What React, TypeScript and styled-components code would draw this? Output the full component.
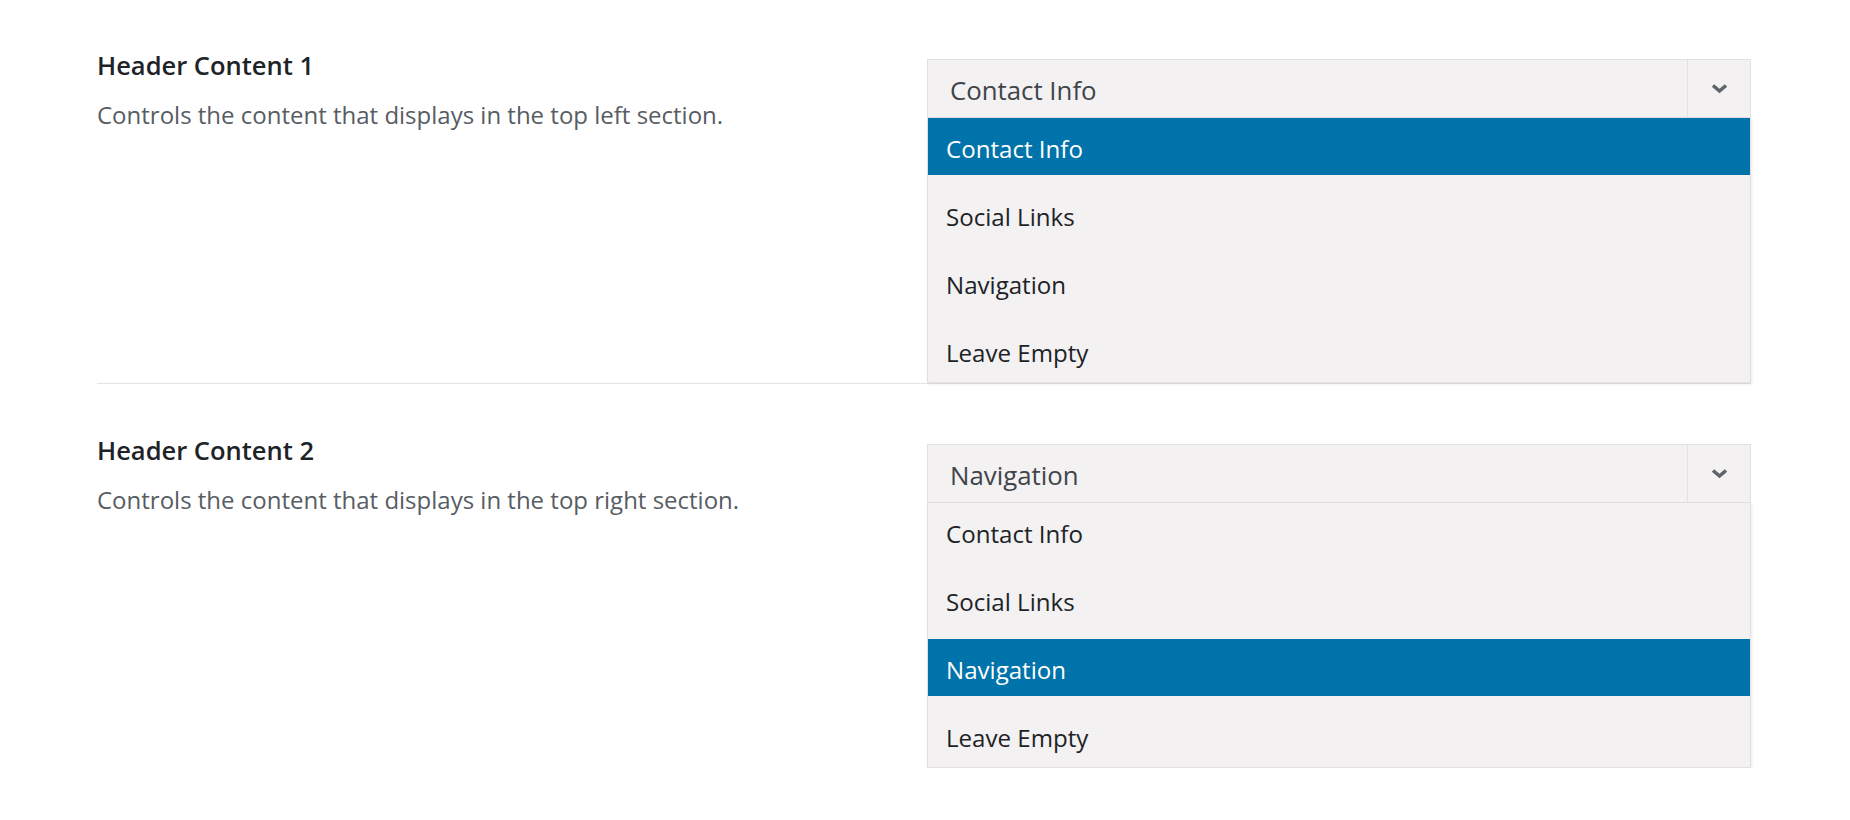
import React from 'react'
import styled, { createGlobalStyle } from 'styled-components';

const GlobalStyle = createGlobalStyle`
  body {
    margin: 0;
    background: #fff;
    font-family: "Open Sans", "Noto Sans", sans-serif;
  }
`

const options = ['Contact Info', 'Social Links', 'Navigation', 'Leave Empty'];

const settings = [
  { title: 'Header Content 1', description: 'Controls the content that displays in the top left section.', value: 'Contact Info' },
  { title: 'Header Content 2', description: 'Controls the content that displays in the top right section.', value: 'Navigation' },
];

function Chevron() {
  return (
    <svg width="17" height="11" viewBox="0 0 17 11">
      <polyline points="2,2.5 8.5,8 15,2.5" fill="none" stroke="#5f6469" strokeWidth="3.6" />
    </svg>
  )
}

function App() {
  return (
    <>
      <GlobalStyle />
      <Page>
        {settings.map((s, i) => (
          <Row key={s.title} $last={i === settings.length - 1}>
            <Info>
              <Title>{s.title}</Title>
              <Description>{s.description}</Description>
            </Info>
            <Select>
              <Current>
                <Value>{s.value}</Value>
                <Arrow><Chevron /></Arrow>
              </Current>
              <List>
                {options.map((o) => (
                  <Option key={o} $active={o === s.value}>{o}</Option>
                ))}
              </List>
            </Select>
          </Row>
        ))}
      </Page>
    </>
  )
}

export default App;

const Page = styled.div`
  padding: 0 99px 0 97px;
`

const Row = styled.div<{ $last?: boolean }>`
  display: grid;
  grid-template-columns: 1fr 824px;
  column-gap: 6px;
  padding-top: 49px;
  border-bottom: ${(p) => (p.$last ? 'none' : '1px solid #e3e3e3')};

  & + & {
    padding-top: 50px;
  }
`

const Info = styled.div`
  display: flex;
  flex-direction: column;
`

const Title = styled.h3`
  margin: 0;
  font-size: 25.5px;
  line-height: 32px;
  font-weight: 600;
  color: #1d2327;
`

const Description = styled.p`
  margin: 17px 0 0;
  font-size: 24px;
  line-height: 34px;
  color: #575d63;
`

const Select = styled.div`
  margin-top: 10px;
  display: flex;
  flex-direction: column;
`

const Current = styled.div`
  display: flex;
  height: 59px;
  box-sizing: border-box;
  background: #f3f1f1;
  border: 1px solid #e2e0e0;
`

const Value = styled.div`
  flex: 1;
  display: flex;
  align-items: center;
  padding: 2px 0 0 22px;
  font-size: 25.8px;
  color: #3f454b;
`

const Arrow = styled.div`
  width: 62px;
  display: flex;
  align-items: center;
  justify-content: center;
  border-left: 1px solid #e2e0e0;
`

const List = styled.div`
  display: flex;
  flex-direction: column;
  gap: 11px;
  padding-bottom: 3px;
  background: #f3f1f1;
  border: 1px solid #e2e0e0;
  border-top: none;
  box-shadow: 1px 1px 3px rgba(0, 0, 0, 0.08);
`

const Option = styled.div<{ $active?: boolean }>`
  height: 57px;
  box-sizing: border-box;
  display: flex;
  align-items: center;
  padding: 3px 0 0 18px;
  font-size: 24.1px;
  color: ${(p) => (p.$active ? '#fff' : '#1d2327')};
  background: ${(p) => (p.$active ? '#0073aa' : 'transparent')};
`
